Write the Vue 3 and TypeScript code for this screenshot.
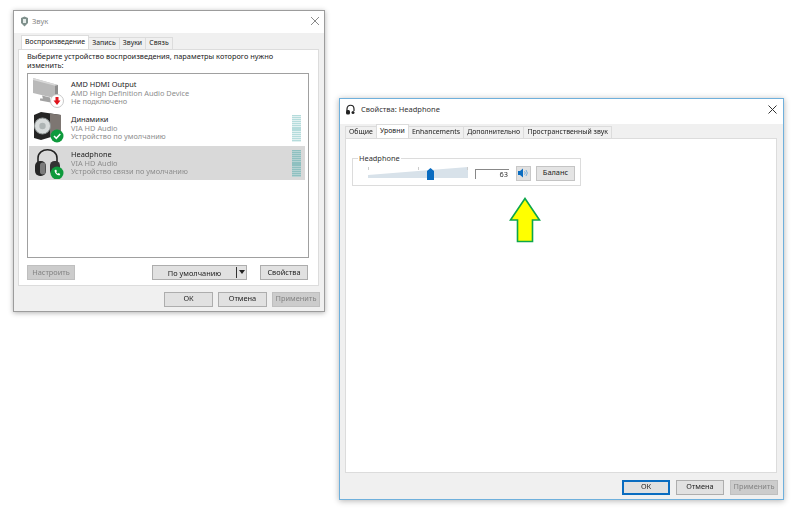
<script setup lang="ts">
interface Device { name: string; driver: string; status: string; kind: 'hdmi' | 'speaker' | 'phone'; selected?: boolean; meter?: boolean }
const devices: Device[] = [
  { name: 'AMD HDMI Output', driver: 'AMD High Definition Audio Device', status: 'Не подключено', kind: 'hdmi' },
  { name: 'Динамики', driver: 'VIA HD Audio', status: 'Устройство по умолчанию', kind: 'speaker', meter: true },
  { name: 'Headphone', driver: 'VIA HD Audio', status: 'Устройство связи по умолчанию', kind: 'phone', selected: true, meter: true },
]
const soundTabs = ['Воспроизведение', 'Запись', 'Звуки', 'Связь']
const propTabs = ['Общие', 'Уровни', 'Enhancements', 'Дополнительно', 'Пространственный звук']
const bars = Array.from({ length: 13 }, (_, i) => i)
</script>

<template>
  <div class="desk">
    <section class="win sound">
      <header class="title">
        <svg class="appicon" width="9" height="11" viewBox="0 0 9 11"><path d="M1 2 4.500 .5 8 2V7L4.500 10.500 1 7Z" fill="#7f908c"/><path d="M3 3h3v4H3Z" fill="#e4ebe9"/></svg>
        <span class="title-text dim">Звук</span>
        <svg class="close" width="10" height="10" viewBox="0 0 10 10"><path d="M1 1 9 9M9 1 1 9" stroke="#8a8a8a" stroke-width="1"/></svg>
      </header>
      <nav class="tabs sound-tabs">
        <span v-for="(t, i) in soundTabs" :key="t" class="tab" :class="{ active: i === 0 }">{{ t }}</span>
      </nav>
      <div class="panel sound-panel">
        <p class="lead">Выберите устройство воспроизведения, параметры которого нужно изменить:</p>
        <div class="list">
          <div v-for="d in devices" :key="d.name" class="row" :class="{ selected: d.selected }">
            <div class="devicon">
              <svg v-if="d.kind === 'hdmi'" width="32" height="32" viewBox="0 0 32 32">
                <path d="M1 1 26 8V22L1 16Z" fill="#b9b9b9"/>
                <path d="M1 1 26 8 24 9 1 3Z" fill="#d8d8d8"/>
                <path d="M26 8V22L23 21.300V8.800Z" fill="#8e8e8e"/>
                <path d="M10 18.500 18 20.500V23L24 25V26.500L8 23.500V21.500L11 21.500Z" fill="#a2a2a2"/>
                <circle cx="25" cy="24" r="6.500" fill="#fff" stroke="#c8c8c8"/>
                <path d="M23.500 20h3v3.500h2L25 28l-3.500-4.500h2Z" fill="#e0141c"/>
              </svg>
              <svg v-else-if="d.kind === 'speaker'" width="32" height="32" viewBox="0 0 32 32">
                <path d="M2 3 9 0 29 3V22L9 28 2 26Z" fill="#252525"/>
                <path d="M18 1.500 29 3V22L18 25Z" fill="#7d7672"/>
                <circle cx="10.500" cy="14" r="8" fill="#d8dcdc" stroke="#8f9595"/>
                <circle cx="10.500" cy="14" r="3.200" fill="#aeb5b5"/>
                <circle cx="25" cy="24" r="6.500" fill="#0e9a3c"/>
                <path d="M22 24l2.300 2.300 4-4.300" fill="none" stroke="#fff" stroke-width="1.500"/>
              </svg>
              <svg v-else width="32" height="32" viewBox="0 0 32 32">
                <path d="M6 18V11C6 0 25 0 25 11V18" fill="none" stroke="#222" stroke-width="1.600"/>
                <rect x="3" y="14" width="11" height="15" rx="5" fill="#262626"/>
                <rect x="8" y="15.500" width="5.500" height="12" rx="2.700" fill="#7b7b7b"/>
                <rect x="18" y="14" width="10" height="14" rx="4.500" fill="#333"/>
                <circle cx="25" cy="26" r="6.500" fill="#0e9a3c"/>
                <path d="M22.500 23.500c.5 3 2 4.500 5 5l.8-1.500-1.800-1-.8.700c-.7-.4-1.200-1-1.500-1.700l.8-.8-1-1.700Z" fill="#fff"/>
              </svg>
            </div>
            <div class="devtext">
              <div class="devname">{{ d.name }}</div>
              <div class="devsub">{{ d.driver }}</div>
              <div class="devsub">{{ d.status }}</div>
            </div>
            <div v-if="d.meter" class="meter">
              <i v-for="b in bars" :key="b"></i>
            </div>
          </div>
        </div>
        <div class="list-actions">
          <button class="btn disabled w48">Настроить</button>
          <div class="split">
            <span class="split-label">По умолчанию</span>
            <span class="split-arrow"></span>
          </div>
          <button class="btn w48">Свойства</button>
        </div>
      </div>
      <footer class="foot sound-foot">
        <button class="btn w49">ОК</button>
        <button class="btn w49">Отмена</button>
        <button class="btn disabled w48">Применить</button>
      </footer>
    </section>

    <section class="win props">
      <header class="title props-title">
        <svg class="appicon" width="11" height="11" viewBox="0 0 11 11"><path d="M2 7V5C2 0 9 0 9 5V7" fill="none" stroke="#222" stroke-width="1.200"/><rect x="1" y="6" width="4" height="4.500" rx="1.500" fill="#222"/><rect x="6.500" y="7" width="3" height="3" rx="1.500" fill="#222"/></svg>
        <span class="title-text">Свойства: Headphone</span>
        <svg class="close dark" width="9" height="9" viewBox="0 0 9 9"><path d="M.5.5 8.500 8.500M8.500.5.500 8.500" stroke="#333" stroke-width="1"/></svg>
      </header>
      <nav class="tabs prop-tabs">
        <span v-for="(t, i) in propTabs" :key="t" class="tab" :class="{ active: i === 1 }">{{ t }}</span>
      </nav>
      <div class="panel prop-panel">
        <fieldset class="group">
          <legend>Headphone</legend>
          <div class="slider">
            <div class="wedge"></div>
            <i class="tick t1"></i><i class="tick t2"></i><i class="tick t3"></i>
            <svg class="thumb" width="7" height="12" viewBox="0 0 7 12"><path d="M3.500 0 7 3V12H0V3Z" fill="#0a6cc0"/></svg>
          </div>
          <div class="level">63</div>
          <button class="mute">
            <svg width="11" height="10" viewBox="0 0 11 10"><path d="M0 3h2L5 .5v9L2 7H0Z" fill="#0a6cc0"/><path d="M6.500 3.300a2.500 2.500 0 0 1 0 3.400M8 2a4.500 4.500 0 0 1 0 6" fill="none" stroke="#5aa0d8" stroke-width=".8"/></svg>
          </button>
          <button class="btn balance">Баланс</button>
        </fieldset>
        <svg class="arrow" width="32" height="46" viewBox="0 0 32 46"><path d="M16 1.500 30.500 23H23.500V44.500H8.500V23H1.500Z" fill="#ffff00" stroke="#0da64a" stroke-width="1.600"/></svg>
      </div>
      <footer class="foot props-foot">
        <button class="btn w48 default">ОК</button>
        <button class="btn w48">Отмена</button>
        <button class="btn disabled w48">Применить</button>
      </footer>
    </section>
  </div>
</template>

<style>
html, body { margin: 0; background: #fff; }
</style>

<style scoped>
.desk { position: relative; width: 800px; height: 515px; overflow: hidden; background: #fff; font-family: "Noto Sans", sans-serif; font-size: 7.400px; color: #222; }
.desk * { box-sizing: border-box; }
.win { position: absolute; display: flex; flex-direction: column; background: #f0f0f0; filter: blur(.35px); }
.sound { left: 13px; top: 10px; width: 312px; height: 302px; border: 1px solid #9c9c9c; box-shadow: 0 1px 5px rgba(0,0,0,.3); }
.props { left: 339px; top: 98px; width: 445px; height: 402px; border: 1px solid #6fb0dc; box-shadow: 0 1px 6px rgba(0,0,0,.3); }
.title { height: 22px; flex: none; display: flex; align-items: center; gap: 3px; background: #fff; padding: 0 4px 2px 6px; }
.props-title { height: 25px; padding: 0 6px 5px 5px; gap: 5px; }
.title-text { font-size: 7.500px; color: #333; }
.dim { color: #888; }
.close { margin-left: auto; }
.tabs { flex: none; display: flex; align-items: flex-end; background: #f0f0f0; }
.sound-tabs { height: 16px; padding-left: 7px; }
.prop-tabs { height: 14px; padding-left: 5px; }
.tab { height: 12px; display: flex; align-items: center; justify-content: center; padding: 0 3.100px; background: #f0f0f0; border: 1px solid #dcdcdc; border-bottom: 0; margin-right: -1px; font-size: 6.900px; line-height: 1; white-space: nowrap; }
.tab.active { height: 14px; background: #fff; position: relative; z-index: 1; }
.panel { background: #fff; border: 1px solid #dcdcdc; }
.sound-panel { margin: 0 5px 0 4px; height: 237px; display: flex; flex-direction: column; padding: 2px 9px 0 8px; }
.lead { margin: 0; font-size: 7.400px; line-height: 9px; color: #222; }
.list { margin-top: 3px; height: 185px; border: 1px solid #a0a0a0; background: #fff; padding: 2px 3px 0 1px; display: flex; flex-direction: column; gap: 1px; }
.row { height: 34px; flex: none; display: flex; align-items: center; padding-left: 3px; }
.row.selected { background: #d9d9d9; }
.devicon { width: 38px; flex: none; display: flex; }
.devtext { flex: 1; line-height: 8.800px; font-size: 7.400px; padding-left: 1px; }
.devname { color: #222; }
.devsub { color: #8d8d8d; }
.meter { width: 9px; height: 27px; margin-right: 4px; display: flex; flex-direction: column; justify-content: space-between; background: #e2f1f1; }
.meter i { display: block; height: 1.200px; background: #b5dcdc; }
.selected .meter { background: #b4d2d2; }
.selected .meter i { background: #8fc0c0; }
.list-actions { display: flex; align-items: center; margin-top: 7px; }
.btn { height: 15px; padding: 0; background: #e1e1e1; border: 1px solid #adadad; font: 7.400px "Noto Sans", sans-serif; color: #222; line-height: 1; }
.w48 { width: 48px; }
.w49 { width: 49px; }
.btn.disabled { background: #ccc; border-color: #bfbfbf; color: #838383; }
.split { width: 95px; height: 15px; margin-left: 77px; margin-right: 13px; display: flex; align-items: center; background: #e1e1e1; border: 1px solid #adadad; }
.split-label { flex: 1; text-align: center; font-size: 7.400px; }
.split-arrow { width: 10px; height: 11px; border-left: 1px solid #333; position: relative; }
.split-arrow::after { content: ""; position: absolute; left: 2px; top: 3px; border: 3px solid transparent; border-top: 4px solid #222; border-bottom: 0; }
.foot { flex: 1; display: flex; align-items: center; justify-content: flex-end; gap: 5px; }
.sound-foot { padding: 1px 4px 0 0; }
.props-foot { padding: 2px 5px 0 0; gap: 6px; }
.default { border: 2px solid #0a6cc0; }
.prop-panel { position: relative; margin: 0 6px 0 5px; height: 335px; padding: 12px 6px; }
.group { width: 229px; height: 28px; margin: 7px 0 0; padding: 0; border: 1px solid #dcdcdc; display: flex; align-items: center; position: relative; }
.group legend { position: absolute; left: 5px; top: -6px; padding: 0 1px; background: #fff; font-size: 7.400px; line-height: 10px; color: #333; }
.slider { position: relative; width: 100px; height: 14px; margin: 4px 7px 0 15px; }
.wedge { position: absolute; left: 0; right: 0; bottom: 3px; height: 11px; background: #d8e2ea; clip-path: polygon(0 72%, 100% 0, 100% 100%, 0 100%); }
.tick { position: absolute; top: 0; width: 1px; height: 3px; background: #ccc; }
.t1 { left: 0; } .t2 { left: 50px; } .t3 { left: 99px; }
.thumb { position: absolute; left: 59px; top: 1px; }
.level { width: 34px; height: 10px; margin-top: 3px; border-left: 1px solid #888; border-top: 1px solid #888; font-size: 7.400px; line-height: 8px; text-align: right; padding-right: 1px; color: #333; }
.mute { width: 15px; height: 15px; margin: 2px 0 0 7px; padding: 0; display: flex; align-items: center; justify-content: center; background: #e1e1e1; border: 1px solid #c8c8c8; }
.balance { width: 39px; margin: 2px 0 0 5px; background: #e4e4e4; border-color: #c4c4c4; }
.arrow { position: absolute; left: 163px; top: 58px; }
</style>
